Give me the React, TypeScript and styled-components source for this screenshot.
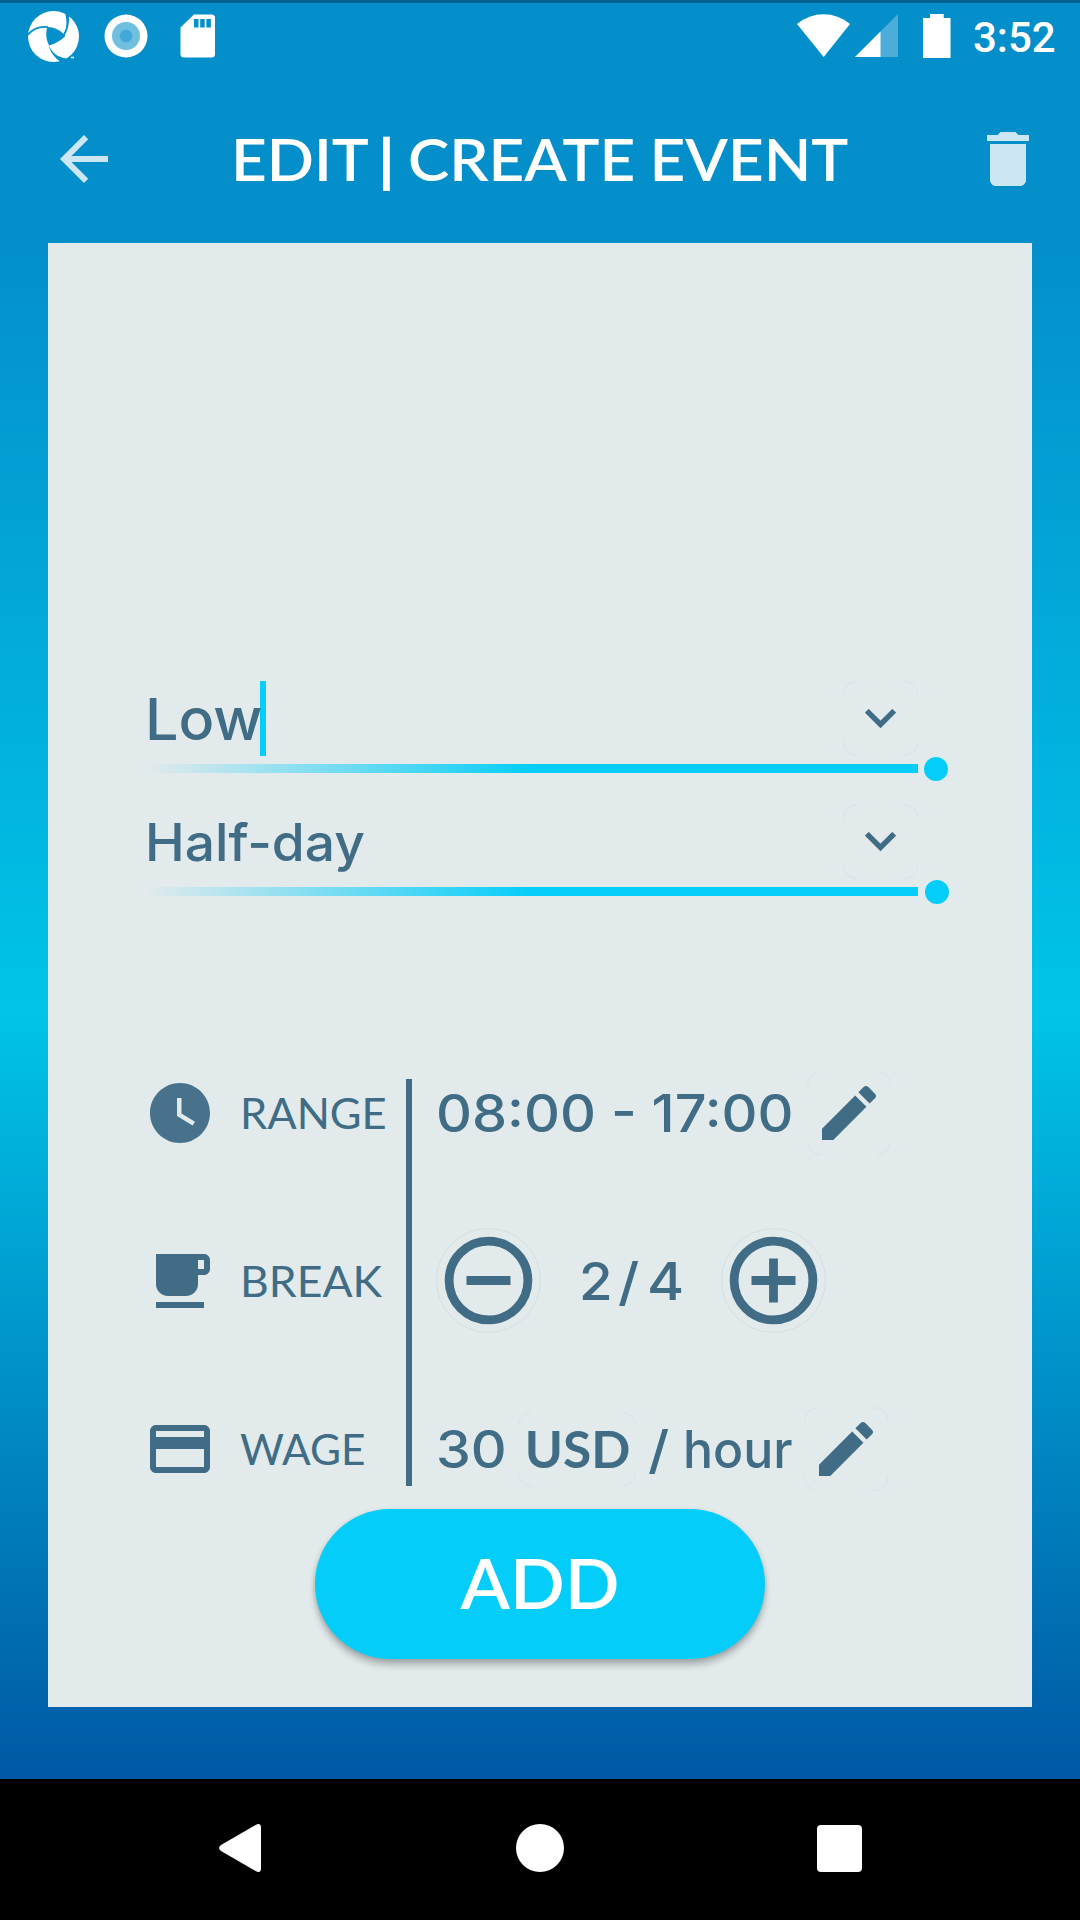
import React from "react";
import styled, { createGlobalStyle } from "styled-components";

const INK = "#406c86";
const CYAN = "#05cdf9";
const PAPER = "#e2eaeb";
const SKY = "#048fcb";

const GlobalStyle = createGlobalStyle`
  *, *::before, *::after { box-sizing: border-box; }
  body { margin: 0; background: #000; }
  svg { display: block; flex: none; }
  button { padding: 0; border: 0; background: none; color: inherit; font: inherit; }
`;

const Screen = styled.div`
  display: flex;
  flex-direction: column;
  width: 1080px;
  height: 1920px;
  overflow: hidden;
  color: ${INK};
  font-family: Inter, "Noto Sans", sans-serif;
  white-space: nowrap;
`;

const StatusBar = styled.header`
  display: flex;
  justify-content: space-between;
  align-items: flex-start;
  height: 72px;
  padding: 8px 24px 0 28px;
  border-top: 3px solid #00628f;
  background: ${SKY};
`;

const StatusLeft = styled.div`
  display: flex;
  align-items: flex-start;
`;

const LogoSlot = styled.div`
  margin-right: 24px;
`;

const RingSlot = styled.div`
  margin: 3px 32px 0 0;
`;

const CardSlot = styled.div`
  margin-top: 3px;
`;

const StatusRight = styled.div`
  display: flex;
  align-items: flex-start;
  padding-top: 3px;
`;

const SignalSlot = styled.div`
  margin: 0 25px 0 5px;
`;

const Clock = styled.time`
  width: 83px;
  margin: -1px 0 0 22px;
  font: 500 42px/50px Roboto, sans-serif;
  color: #fff;
`;

const Toolbar = styled.div`
  display: flex;
  align-items: center;
  height: 171px;
  padding: 3px 36px 0 48px;
  background: ${SKY};
  color: #cde6f4;
`;

const Title = styled.h1`
  flex: 1;
  margin: 0 0 0 111px;
  color: #fff;
  font: 600 58px/72px Lato, sans-serif;
  word-spacing: -1px;
  transform: scaleX(1.07);
  transform-origin: left;
`;

const TitleBar = styled.span`
  margin: 0 -1px 0 -3px;
  font-weight: 900;
`;

const Backdrop = styled.main`
  height: 1536px;
  padding: 0 48px;
  background: linear-gradient(180deg, ${SKY} 0%, #00c4e8 50%, #0058a4 100%);
`;

const Card = styled.section`
  height: 1464px;
  padding: 438px 96px 0;
  background: ${PAPER};
`;

const Field = styled.div`
  height: 123px;
  padding-left: 2px;
`;

const FieldInput = styled.div`
  display: flex;
  align-items: center;
  width: 772px;
  height: 76px;
`;

const FieldText = styled.span<{ $size: number; $w: number; $drop?: number }>`
  width: ${p => p.$w}px;
  margin-left: -1px;
  padding-top: ${p => p.$drop ?? 0}px;
  font-size: ${p => p.$size}px;
  line-height: 76px;
  font-weight: 550;
  transform: scaleX(1.025);
  transform-origin: left;
`;

const Caret = styled.i`
  width: 6px;
  height: 75px;
  margin: 0 0 1px 1px;
  background: ${CYAN};
`;

const FramedBox = styled.button<{ $w: number; $h: number }>`
  position: relative;
  display: flex;
  flex: none;
  align-items: center;
  justify-content: center;
  width: ${p => p.$w}px;
  height: ${p => p.$h}px;
`;

const FrameArt = styled.svg`
  position: absolute;
  inset: 0;
`;

const ChevronSlot = styled.div`
  margin: 0 0 1px auto;
`;

const UnderlineRow = styled.div<{ $gap: number }>`
  display: flex;
  align-items: flex-start;
  gap: ${p => p.$gap}px;
  height: 24px;
`;

const Underline = styled.div`
  flex: none;
  width: 772px;
  height: 9px;
  margin-top: 7px;
  background: linear-gradient(90deg, rgba(5, 205, 249, 0) 0%, ${CYAN} 50%);
`;

const Dot = styled.i`
  flex: none;
  width: 24px;
  height: 24px;
  border-radius: 50%;
  background: ${CYAN};
`;

const Details = styled.div`
  display: grid;
  grid-template-columns: 262px 6px 1fr;
  height: 420px;
  margin-top: 144px;
`;

const Column = styled.div<{ $indent?: number }>`
  display: flex;
  flex-direction: column;
  gap: 84px;
  padding-left: ${p => p.$indent ?? 0}px;
`;

const Row = styled.div`
  display: flex;
  align-items: center;
  height: 84px;
`;

const Label = styled.span<{ $stretch: number }>`
  margin: 0 0 0 24px;
  font: 400 42px/60px Lato, sans-serif;
  transform: scaleX(${p => p.$stretch});
  transform-origin: left;
`;

const Divider = styled.div`
  margin: 8px 0 5px;
  background: ${INK};
`;

const Value = styled.span<{ $w: number; $stretch: number }>`
  flex: none;
  width: ${p => p.$w}px;
  font-size: 51.5px;
  line-height: 70px;
  font-weight: 550;
  transform: scaleX(${p => p.$stretch});
  transform-origin: left;
`;

const Unit = styled.span`
  position: relative;
  margin: 0 0 3px 1px;
  font: 700 51.5px/70px Lato, sans-serif;
`;

const PerHour = styled.div`
  display: flex;
  width: 168px;
  padding-left: 12px;
`;

const Counter = styled.div`
  display: flex;
  align-items: center;
  width: 180px;
  padding-left: 38px;
`;

const StepButton = styled.button`
  height: 105px;
  margin: -11px 0 -10px;
`;

const AddButton = styled.button`
  display: block;
  width: 450px;
  height: 150px;
  margin: 18px 0 0 171px;
  border-radius: 75px;
  background: ${CYAN};
  color: #fff;
  font: 600 70px/146px Lato, sans-serif;
  box-shadow: 0 6px 7px rgba(0, 0, 0, 0.24), 0 1px 5px rgba(0, 0, 0, 0.12);
`;

const AddText = styled.span`
  display: block;
  height: 150px;
  transform: scaleX(1.03);
`;

const NavBar = styled.nav`
  display: flex;
  align-items: center;
  justify-content: space-between;
  height: 141px;
  padding: 0 218px 3px 219px;
  background: #000;
`;

const HomeSlot = styled.div`
  margin: 0 -1px 0 1px;
`;

const Glyph = ({ d, size = 72, opacity }: { d: string; size?: number; opacity?: number }) => (
  <svg width={size} height={size} viewBox="0 0 24 24" fill="currentColor" opacity={opacity}>
    <path d={d} />
  </svg>
);

const PENCIL =
  "M3 17.25V21h3.75L17.81 9.94l-3.75-3.75L3 17.25zM20.71 7.04c.39-.39.39-1.02 0-1.41l-2.34-2.34c-.39-.39-1.02-.39-1.41 0l-1.83 1.83 3.75 3.75 1.83-1.83z";

const Framed = ({ w, h, children }: { w: number; h: number; children: React.ReactNode }) => (
  <FramedBox $w={w} $h={h}>
    <FrameArt width={w} height={h} fill="none" stroke="#cfe5e5" strokeWidth=".9">
      <path
        d={`M.5 14A13.5 13.5 0 0 1 14 .5M${w - 14} .5A13.5 13.5 0 0 1 ${w - 0.5} 14M${w - 0.5} ${h - 14}A13.5 13.5 0 0 1 ${w - 14} ${h - 0.5}M14 ${h - 0.5}A13.5 13.5 0 0 1 .5 ${h - 14}`}
      />
    </FrameArt>
    {children}
  </FramedBox>
);

const Chevron = () => (
  <ChevronSlot>
    <Framed w={75} h={75}>
      <svg width="31" height="20" viewBox="0 0 31 20" fill="none" stroke={INK} strokeWidth="5.4">
        <path d="M1.8 1.8L15.500 15.500L29.200 1.8" />
      </svg>
    </Framed>
  </ChevronSlot>
);

const Stepper = ({ plus }: { plus?: boolean }) => (
  <StepButton>
    <svg width="105" height="105" viewBox="0 0 105 105">
      <circle cx="52.5" cy="52.5" r="52" fill="none" stroke="#d6dfe1" strokeWidth="1" />
      <circle cx="52.5" cy="52.5" r="39.4" fill="none" stroke={INK} strokeWidth="8.8" />
      <path d={plus ? "M30.500 52.500h44M52.500 30.500v44" : "M30.500 52.500h44"} stroke={INK} strokeWidth="8.8" />
    </svg>
  </StepButton>
);

export default function App() {
  return (
    <Screen>
      <GlobalStyle />
      <StatusBar>
        <StatusLeft>
          <LogoSlot>
            <svg width="52" height="52" viewBox="28 11 52 52">
              <circle cx="53.5" cy="36.5" r="25.5" fill="#fff" />
              <path d="M47.300 27C54 27 60.500 30 65.500 36C60 41 55 44 49.200 45.500C46 40 45.500 33 47.300 27Z" fill={SKY} />
              <path d="M27 35.500C34 27.500 41 26 48 27.200" fill="none" stroke={SKY} strokeWidth="1.8" />
              <path d="M66 10L68 17C68.500 24 67 30 63.500 35.500" fill="none" stroke={SKY} strokeWidth="1.8" />
              <path d="M65 12C67 21 67.500 28 63.700 34.800C67 30 69 24 68.500 15Z" fill={SKY} />
              <path d="M48.500 45C52 53 58 57.500 67 58.500L61 62C55 58 50 52 48.500 45Z" fill={SKY} />
              <path d="M71 57.500h3" stroke="#fff" strokeWidth="1.5" />
            </svg>
          </LogoSlot>
          <RingSlot>
            <svg width="44" height="44" viewBox="0 0 44 44">
              <circle cx="22" cy="22" r="21.5" fill="#fff" />
              <circle cx="22" cy="22" r="14" fill="#70bee0" />
              <circle cx="22" cy="22" r="6.3" fill="#42a8d8" />
            </svg>
          </RingSlot>
          <CardSlot>
            <svg width="35" height="44" viewBox="0 0 35 44">
              <path d="M14 .5H31.500a3.500 3.500 0 0 1 3.500 3.500V40a3.500 3.500 0 0 1-3.500 3.500H4A3.500 3.500 0 0 1 .5 40V13.500Z" fill="#fff" />
              <path d="M14 5h4.500v8.500h-4.500zM20.200 5h4.500v8.500h-4.500zM26.400 5h4.500v8.500h-4.500z" fill={SKY} />
            </svg>
          </CardSlot>
        </StatusLeft>
        <StatusRight>
          <svg width="53" height="45" viewBox="0 0 53 45">
            <path d="M0 10Q12 .3 26.500 .3T53 10L26.700 43Z" fill="#fff" />
          </svg>
          <SignalSlot>
            <svg width="43" height="45" viewBox="0 0 43 45">
              <path d="M43 0V43H0Z" fill="#4dadd9" />
              <path d="M25.500 17.500V43H0Z" fill="#fff" />
            </svg>
          </SignalSlot>
          <svg width="28" height="45" viewBox="0 0 28 45">
            <path d="M7 0H20.700V4H27.500V44H0V4H7Z" fill="#fff" />
          </svg>
          <Clock>3:52</Clock>
        </StatusRight>
      </StatusBar>

      <Toolbar>
        <Glyph d="M20 11H7.830l5.590-5.590L12 4l-8 8 8 8 1.410-1.410L7.830 13H20v-2z" />
        <Title>
          EDIT <TitleBar>|</TitleBar> CREATE EVENT
        </Title>
        <Glyph d="M6 19c0 1.100.9 2 2 2h8c1.100 0 2-.9 2-2V7H6v12zM19 4h-3.500l-1-1h-5l-1 1H5v2h14V4z" />
      </Toolbar>

      <Backdrop>
        <Card>
          <Field>
            <FieldInput>
              <FieldText $size={57.8} $w={114}>Low</FieldText>
              <Caret />
              <Chevron />
            </FieldInput>
            <UnderlineRow $gap={6}>
              <Underline />
              <Dot />
            </UnderlineRow>
          </Field>
          <Field>
            <FieldInput>
              <FieldText $size={52} $w={220} $drop={2}>Half-day</FieldText>
              <Chevron />
            </FieldInput>
            <UnderlineRow $gap={7}>
              <Underline />
              <Dot />
            </UnderlineRow>
          </Field>

          <Details>
            <Column>
              <Row>
                <Glyph
                  opacity={0.95}
                  d="M12 2C6.500 2 2 6.500 2 12s4.500 10 10 10 10-4.500 10-10S17.500 2 12 2zm4.200 14.200L11 13V7h1.500v5.200l4.500 2.700-.8 1.300z"
                />
                <Label $stretch={1.035}>RANGE</Label>
              </Row>
              <Row>
                <Glyph d="M20 3H4v10c0 2.210 1.790 4 4 4h6c2.210 0 4-1.790 4-4v-3h2c1.110 0 2-.890 2-2V5c0-1.110-.890-2-2-2zm0 5h-2V5h2v3zM4 19h16v2H4z" />
                <Label $stretch={1.06}>BREAK</Label>
              </Row>
              <Row>
                <Glyph d="M20 4H4c-1.110 0-1.990.890-1.990 2L2 18c0 1.110.890 2 2 2h16c1.110 0 2-.890 2-2V6c0-1.110-.890-2-2-2zm0 14H4v-6h16v6zm0-10H4V6h16v2z" />
                <Label $stretch={1.01}>WAGE</Label>
              </Row>
            </Column>
            <Divider />
            <Column $indent={24}>
              <Row>
                <Value $w={371} $stretch={1.083}>08:00 - 17:00</Value>
                <Framed w={84} h={84}>
                  <Glyph d={PENCIL} />
                </Framed>
              </Row>
              <Row>
                <Stepper />
                <Counter>
                  <Value $w={39} $stretch={1.06}>2</Value>
                  <Value $w={29} $stretch={1.12}>/</Value>
                  <Value $w={36} $stretch={1.1}>4</Value>
                </Counter>
                <Stepper plus />
              </Row>
              <Row>
                <Value $w={82} $stretch={1.08}>30</Value>
                <Framed w={118} h={75}>
                  <Unit>USD</Unit>
                </Framed>
                <PerHour>
                  <Value $w={35} $stretch={1.12}>/</Value>
                  <Value $w={121} $stretch={0.97}>hour</Value>
                </PerHour>
                <Framed w={84} h={84}>
                  <Glyph d={PENCIL} />
                </Framed>
              </Row>
            </Column>
          </Details>

          <AddButton>
            <AddText>ADD</AddText>
          </AddButton>
        </Card>
      </Backdrop>

      <NavBar>
        <svg width="42" height="48" viewBox="0 0 42 48">
          <path d="M37 .8Q42 -1.500 42 4V44Q42 49.500 37 47.200L2 27Q-2 24 2 21Z" fill="#fff" />
        </svg>
        <HomeSlot>
          <svg width="48" height="48" viewBox="0 0 48 48">
            <circle cx="24" cy="24" r="24" fill="#fff" />
          </svg>
        </HomeSlot>
        <svg width="45" height="47" viewBox="0 0 45 47">
          <rect width="45" height="47" rx="4" fill="#fff" />
        </svg>
      </NavBar>
    </Screen>
  );
}
